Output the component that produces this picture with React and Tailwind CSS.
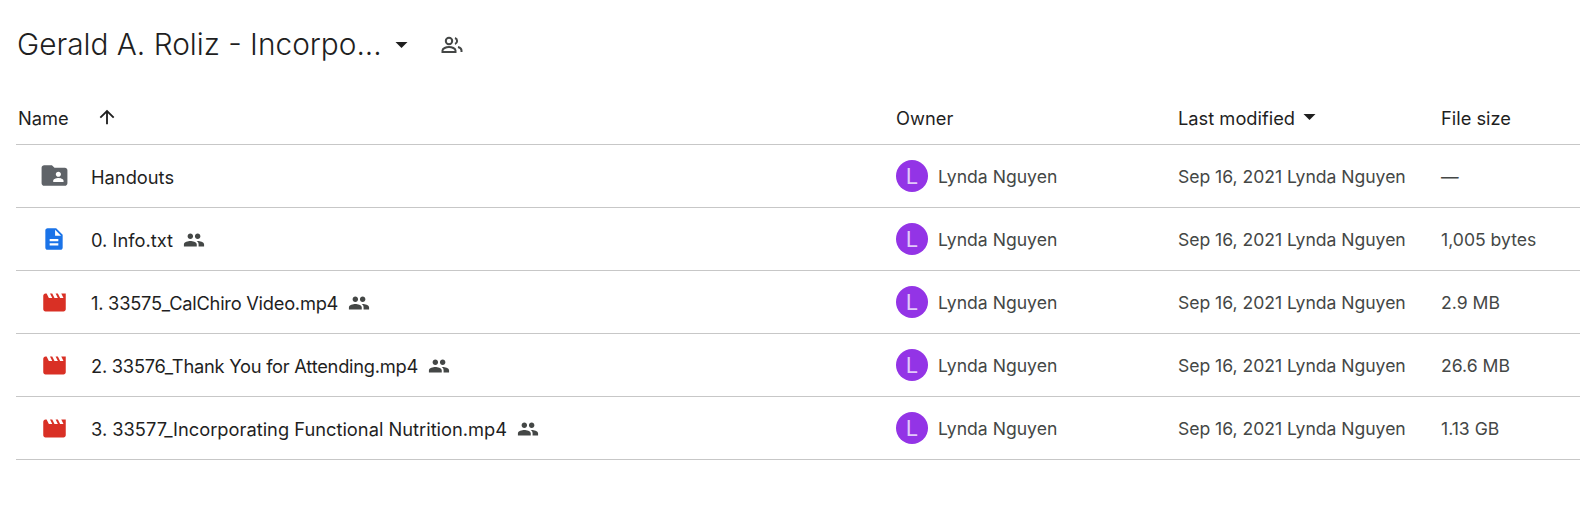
const rows = [
    { name: "Handouts", type: "folder", size: "—" },
    { name: "0. Info.txt", type: "doc", shared: true, size: "1,005 bytes" },
    { name: "1. 33575_CalChiro Video.mp4", type: "video", shared: true, size: "2.9 MB", tight: "tracking-[-0.25px]" },
    { name: "2. 33576_Thank You for Attending.mp4", type: "video", shared: true, size: "26.6 MB", tight: "tracking-[-0.25px]" },
    { name: "3. 33577_Incorporating Functional Nutrition.mp4", type: "video", shared: true, size: "1.13 GB" },
];

const cols = "grid grid-cols-[880px_282px_263px_1fr]";

function FileIcon({ type }) {
    if (type === "folder") {
        return (
            <svg viewBox="0 0 24 24" className="h-[31px] w-[31px] -mt-[1px]" fill="#5f6368">
                <path d="M20 6h-8l-2-2H4c-1.1 0-2 .9-2 2v12c0 1.1.9 2 2 2h16c1.1 0 2-.9 2-2V8c0-1.1-.9-2-2-2zm-5 3c1.1 0 2 .9 2 2s-.9 2-2 2-2-.9-2-2 .9-2 2-2zm4 8h-8v-1c0-1.33 2.67-2 4-2s4 .67 4 2v1z" />
            </svg>
        );
    }
    if (type === "doc") {
        return (
            <svg viewBox="0 0 24 24" className="h-[26px] w-[26px]" fill="#1a73e8">
                <path d="M14 2H6c-1.1 0-2 .9-2 2v16c0 1.1.9 2 2 2h12c1.1 0 2-.9 2-2V8l-6-6zm2 16H8v-2h8v2zm0-4H8v-2h8v2zm-3-5V3.5L18.5 9H13z" />
            </svg>
        );
    }
    return (
        <svg viewBox="0 0 24 24" className="h-[27px] w-[27px]" fill="#d93025">
            <path d="M18 4l2 4h-3l-2-4h-2l2 4h-3l-2-4H8l2 4H7L5 4H4c-1.1 0-2 .9-2 2v12c0 1.1.9 2 2 2h16c1.1 0 2-.9 2-2V4h-4z" />
        </svg>
    );
}

function People({ className }) {
    return (
        <svg viewBox="0 0 24 24" className={className} fill="#444746">
            <path d="M16 11c1.66 0 2.99-1.34 2.99-3S17.66 5 16 5s-3 1.34-3 3 1.34 3 3 3zm-8 0c1.66 0 2.99-1.34 2.99-3S9.66 5 8 5 5 6.34 5 8s1.34 3 3 3zm0 2c-2.33 0-7 1.17-7 3.5V19h14v-2.5C15 14.17 10.33 13 8 13zm8 0c-.29 0-.62.02-.97.05 1.16.84 1.97 1.97 1.97 3.45V19h6v-2.5c0-2.33-4.67-3.5-7-3.5z" />
        </svg>
    );
}

export default function App() {
    return (
        <div className="h-[515px] bg-white overflow-hidden font-['Inter',sans-serif] text-[#1f1f1f]">
            <div className="flex items-center h-[90px] pl-[17px]">
                <h1 className="text-[29.8px] font-light leading-none">Gerald A. Roliz - Incorpo...</h1>
                <svg viewBox="0 0 10 5" className="ml-[13px] h-[6px] w-[13px]" fill="#1f1f1f"><path d="M0 0l5 5 5-5z" /></svg>
                <svg viewBox="0 0 24 24" className="ml-[32px] h-[24px] w-[24px]" fill="none" stroke="#444746" strokeWidth="2">
                    <circle cx="9" cy="8" r="3.2" />
                    <path d="M2.5 19v-1.5c0-2 3.5-3.5 6.5-3.5s6.5 1.5 6.5 3.5V19z" />
                    <path d="M15 5a3.2 3.2 0 0 1 0 6M18 14c2 .5 3.5 1.7 3.5 3.5V19" />
                </svg>
            </div>
            <div className="ml-[16px]">
                <div className={`${cols} h-[55px] items-center border-b border-[#c7c7c7] text-[18.3px]`}>
                    <div className="flex items-center pl-[2px]">
                        <span className="pt-[3px]">Name</span>
                        <svg viewBox="0 0 24 24" className="ml-[27px] h-[22px] w-[22px]" fill="#1f1f1f"><path d="M4 12l1.41 1.41L11 7.83V20h2V7.83l5.58 5.59L20 12l-8-8-8 8z" /></svg>
                    </div>
                    <div className="pt-[3px]">Owner</div>
                    <div className="flex items-center">
                        <span className="pt-[3px]">Last modified</span>
                        <svg viewBox="0 0 10 5" className="ml-[8px] h-[6px] w-[13px]" fill="#1f1f1f"><path d="M0 0l5 5 5-5z" /></svg>
                    </div>
                    <div className="pt-[3px]">File size</div>
                </div>
                {rows.map((r) => (
                    <div key={r.name} className={`${cols} h-[63px] items-center border-b border-[#c7c7c7] text-[17.6px]`}>
                        <div className="flex items-center">
                            <div className="ml-[22px] mr-[21px] flex w-[32px] justify-center"><FileIcon type={r.type} /></div>
                            <span className={`pt-[3px] text-[18.3px] ${r.tight || ""}`}>{r.name}</span>
                            {r.shared && <People className="ml-[10px] mt-[2px] h-[22px] w-[22px]" />}
                        </div>
                        <div className="flex items-center text-[#444746]">
                            <div className="flex h-[32px] w-[32px] items-center justify-center rounded-full bg-[#9334e6] text-[22px] font-normal text-[#e2c9fa]">L</div>
                            <span className="ml-[10px] pt-[3px]">Lynda Nguyen</span>
                        </div>
                        <div className="pt-[3px] text-[#444746] whitespace-nowrap tracking-[-0.04px]">Sep 16, 2021 Lynda Nguyen</div>
                        <div className="pt-[3px] text-[#444746]">{r.size}</div>
                    </div>
                ))}
            </div>
        </div>
    );
}
